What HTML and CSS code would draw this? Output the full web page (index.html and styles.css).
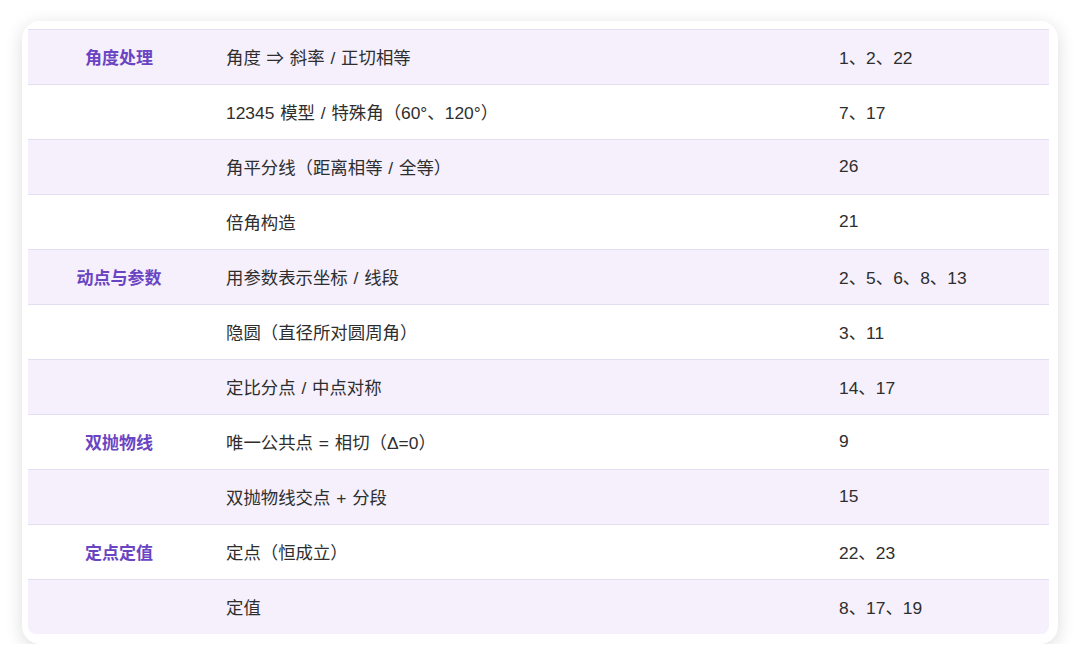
FILE: index.html
```html
<!DOCTYPE html>
<html lang="zh">
<head>
<meta charset="utf-8">
<link rel="stylesheet" href="styles.css">
</head>
<body>
<div class="card">
  <div class="table">
    <div class="row band"><div class="cat">角度处理</div><div class="cell">角度 ⇒ 斜率 / 正切相等</div><div class="cell">1、2、22</div></div>
    <div class="row"><div class="cat"></div><div class="cell">12345 模型 / 特殊角（60°、120°）</div><div class="cell">7、17</div></div>
    <div class="row band"><div class="cat"></div><div class="cell">角平分线（距离相等 / 全等）</div><div class="cell">26</div></div>
    <div class="row"><div class="cat"></div><div class="cell">倍角构造</div><div class="cell">21</div></div>
    <div class="row band"><div class="cat">动点与参数</div><div class="cell">用参数表示坐标 / 线段</div><div class="cell">2、5、6、8、13</div></div>
    <div class="row"><div class="cat"></div><div class="cell">隐圆（直径所对圆周角）</div><div class="cell">3、11</div></div>
    <div class="row band"><div class="cat"></div><div class="cell">定比分点 / 中点对称</div><div class="cell">14、17</div></div>
    <div class="row"><div class="cat">双抛物线</div><div class="cell">唯一公共点 = 相切（Δ=0）</div><div class="cell">9</div></div>
    <div class="row band"><div class="cat"></div><div class="cell">双抛物线交点 + 分段</div><div class="cell">15</div></div>
    <div class="row"><div class="cat">定点定值</div><div class="cell">定点（恒成立）</div><div class="cell">22、23</div></div>
    <div class="row band last"><div class="cat"></div><div class="cell">定值</div><div class="cell">8、17、19</div></div>
  </div>
</div>
</body>
</html>
```

FILE: styles.css
```css
html, body {
  margin: 0;
  padding: 0;
  background: #ffffff;
}
body {
  padding: 21px 22px 0 22px;
  font-family: "Liberation Sans", "Noto Sans CJK SC", sans-serif;
}
.card {
  width: 1036px;
  box-sizing: border-box;
  background: #ffffff;
  border-radius: 18px;
  box-shadow: 0 4px 18px rgba(0, 0, 0, 0.14);
  padding: 8px 9px 10px 6px;
}
.table {
  border-top: 1px solid #e4def2;
  border-radius: 0 0 8px 8px;
  overflow: hidden;
}
.row {
  display: grid;
  grid-template-columns: 182px 613px 1fr;
  height: 55px;
  box-sizing: border-box;
  padding-bottom: 2px;
  align-items: center;
  border-bottom: 1px solid #e4def2;
  font-size: 17.4px;
  color: #2e2e2e;
}
.row.last {
  border-bottom: none;
  height: 54px;
}
.band {
  background: #f5f0fc;
}
.cat {
  text-align: center;
  font-family: "Noto Sans CJK SC", sans-serif;
  font-weight: 700;
  font-size: 17px;
  color: #6a44c2;
}
.cell {
  padding-left: 16px;
  white-space: nowrap;
  word-spacing: 1px;
}
```
